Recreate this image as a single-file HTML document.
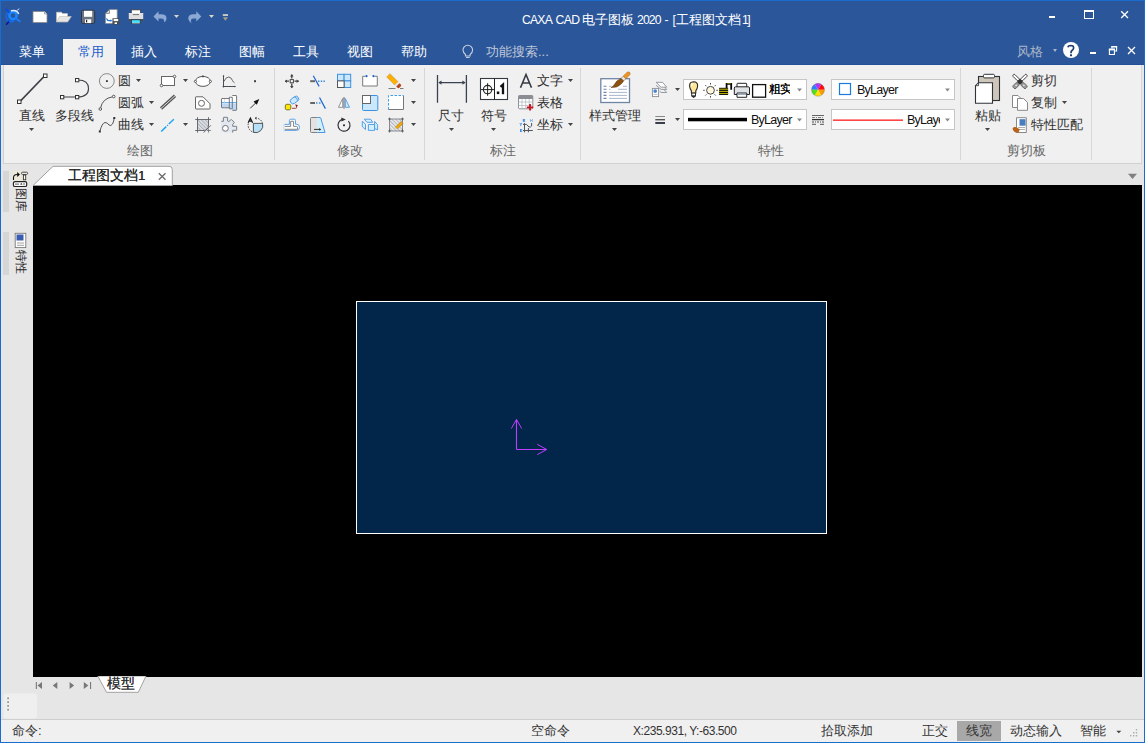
<!DOCTYPE html>
<html><head><meta charset="utf-8">
<style>
*{box-sizing:border-box}
html,body{margin:0;padding:0}
body{width:1145px;height:743px;overflow:hidden;position:relative;background:#e6e6e6;font-family:"Liberation Sans",sans-serif;font-size:13px;color:#444}
.a{position:absolute}
.t{position:absolute;white-space:nowrap;line-height:1}
svg{position:absolute;overflow:visible}
.dd{position:absolute;width:0;height:0;border-left:2.5px solid transparent;border-right:2.5px solid transparent;border-top:3px solid #444}
.sep{position:absolute;width:1px;top:68px;height:92px;background:#d6d6d6}
.lbl{position:absolute;top:144px;line-height:14px;font-size:13px;color:#666;white-space:nowrap}
.tab{position:absolute;top:45px;line-height:14px;color:#fff;white-space:nowrap}
</style></head><body>
<!-- window border -->
<div class="a" style="left:0;top:0;width:1145px;height:743px;border:1px solid #1a6dd0"></div>
<!-- title + tab bar -->
<div class="a" style="left:1px;top:1px;width:1143px;height:64px;background:#2b579a"></div>
<div class="a" style="left:1px;top:64px;width:1143px;height:1px;background:#24509a"></div>
<div class="t" style="left:522px;top:14px;color:#fff;font-size:12.2px;letter-spacing:-0.8px">CAXA</div><div class="t" style="left:555.5px;top:14px;color:#fff;font-size:12.2px;letter-spacing:-0.6px">CAD</div>
<div class="t" style="left:582px;top:13px;color:#fff;font-size:13px">电子图板</div>
<div class="t" style="left:637px;top:14px;color:#fff;font-size:12.2px;letter-spacing:-0.9px">2020</div>
<div class="t" style="left:664.5px;top:14px;color:#fff;font-size:12.2px">-</div>
<div class="t" style="left:672.5px;top:14px;color:#fff;font-size:12.2px">[</div>
<div class="t" style="left:676px;top:13px;color:#fff;font-size:13px">工程图文档</div>
<div class="t" style="left:742px;top:14px;color:#fff;font-size:12.2px;letter-spacing:-1.5px">1]</div>
<!-- QAT icons -->
<svg style="left:0;top:0" width="240" height="34">
 <!-- logo -->
 <g fill="none" stroke-linecap="round">
  <path d="M9.5 10.5 Q5.5 13.5 6.5 18 Q7.5 21.5 11 21.5" stroke="#1468e8" stroke-width="1.6"/>
  <circle cx="13" cy="15.6" r="3.6" stroke="#1a86ff" stroke-width="2.6"/>
  <path d="M11.5 10.8 Q16.5 9.5 18.5 13.5" stroke="#d6ecff" stroke-width="1.5"/>
  <path d="M17.5 10 L19 9" stroke="#cfe6ff" stroke-width="1"/>
  <path d="M5.8 9.2 L9 12" stroke="#0a4ed8" stroke-width="1.7"/>
  <path d="M15.5 18.3 L19.8 21.2" stroke="#1a7cff" stroke-width="1.9"/>
  <path d="M6.5 24.2 L9.3 21.2" stroke="#001a9a" stroke-width="1.6"/>
  <path d="M9.5 21 Q11.5 22.2 13.5 21" stroke="#126ef0" stroke-width="1.8"/>
 </g>
 <!-- new -->
 <path d="M33 11.5 H44.5 L47 14 V22.5 H33 Z" fill="#fff" stroke="#8a8a8a" stroke-width="0.8"/>
 <path d="M44.5 11.5 V14 H47" fill="#d8d8d8" stroke="#8a8a8a" stroke-width="0.6"/>
 <!-- open -->
 <path d="M56.5 12.2 H61.5 L62.5 13.5 H67.5 V21.8 H56.5 Z" fill="#fff" stroke="#c8c0b0" stroke-width="0.6"/>
 <path d="M56.5 21.8 L59.5 16.5 H71.3 L67.8 21.8 Z" fill="#e6e6e6" stroke="#c8c0b0" stroke-width="0.6"/>
 <!-- save -->
 <rect x="81.5" y="10.2" width="13.2" height="13.2" rx="1.3" fill="#6c7480" stroke="#27354a" stroke-width="1"/>
 <rect x="84" y="10.8" width="8.2" height="6" fill="#fff"/>
 <rect x="85" y="19.3" width="6.2" height="3.8" fill="#fff"/>
 <rect x="86" y="19.8" width="1.2" height="2.6" fill="#222"/>
 <!-- save as -->
 <path d="M109.5 9.5 H117.2 V23.5 H105.5 V13.5 Z" fill="#fff" stroke="#8a8a8a" stroke-width="0.7"/>
 <path d="M105.5 13.5 H109.5 V9.5 Z" fill="#d6d6d6" stroke="#777" stroke-width="0.7"/>
 <path d="M106.5 18.3 Q107 20.6 109 20.6 H111" fill="none" stroke="#2a78d0" stroke-width="1.2"/>
 <path d="M110.5 19.2 L112.2 20.6 L110.5 22 Z" fill="#2a78d0"/>
 <rect x="112.4" y="18.2" width="7.2" height="6.3" rx="0.6" fill="#484c54"/>
 <rect x="113.6" y="19" width="4.6" height="2.1" fill="#fff"/>
 <rect x="114.6" y="22.4" width="2.4" height="1.6" fill="#fff"/>
 <!-- printer -->
 <path d="M131.3 9.8 H140.6 V13 L139 14.6 H132.9 L131.3 13 Z" fill="#fff" stroke="#2a2e34" stroke-width="0.8"/>
 <rect x="128.8" y="13.3" width="14.4" height="5.9" fill="#dedede"/>
 <rect x="128.8" y="13.3" width="14.4" height="0.8" fill="#f4f4f4"/>
 <path d="M132.9 14.6 H139" stroke="#555" stroke-width="0.8"/>
 <rect x="128.6" y="19.1" width="14.8" height="2" fill="#4a5058"/>
 <rect x="131.6" y="19.8" width="8.6" height="3.6" fill="#48dcfd" stroke="#2a2e34" stroke-width="0.7"/>
 <rect x="132" y="22.8" width="7.8" height="0.6" fill="#d8d0c8"/>
 <!-- undo -->
 <path d="M153.5 16.5 L158.5 11.2 V14.2 H162 Q166.8 14.5 166.5 19 Q166 21.5 164 22.6 Q164.6 20.8 163.5 19.2 Q162.5 18.3 160 18.5 H158.5 V21.6 Z" fill="#8ca9d6"/>
 <path d="M174 15 H179 L176.5 18 Z" fill="#ddd6c8"/>
 <!-- redo -->
 <path d="M201.3 16.5 L196.3 11.2 V14.2 H192.8 Q188 14.5 188.3 19 Q188.8 21.5 191.5 23.5 Q190.2 20.8 191.3 19.2 Q192.3 18.3 194.8 18.5 H196.3 V21.6 Z" fill="#8ca9d6"/>
 <path d="M209 15 H214 L211.5 18 Z" fill="#ddd6c8"/>
 <!-- customize -->
 <rect x="222.8" y="14.2" width="5.2" height="1.7" fill="#ddd6c8"/>
 <path d="M222.8 17.2 H228 L225.4 20.8 Z" fill="#a89e88"/>
</svg>
<!-- window controls -->
<div class="a" style="left:1049px;top:16px;width:6px;height:2px;background:#fff"></div>
<div class="a" style="left:1084px;top:10px;width:9.5px;height:9px;border:1px solid #fff;border-top-width:2px"></div>
<svg style="left:1120px;top:10px" width="10" height="10"><path d="M1.2 1.2 L8 8 M8 1.2 L1.2 8" stroke="#fff" stroke-width="1.3"/></svg>
<!-- ribbon-row right controls -->
<div class="a" style="left:1052.5px;top:48.5px;width:0;height:0;border-left:2.5px solid transparent;border-right:2.5px solid transparent;border-top:3px solid #aab4c6"></div>
<div class="a" style="left:1063px;top:42px;width:16px;height:16px;border-radius:50%;background:#fff"></div>
<svg style="left:1060px;top:40px" width="20" height="20"><path d="M7.8 7.3 Q8.3 5.5 10.8 5.5 Q13.8 5.6 13.6 8.2 Q13.4 9.6 12 10.5 Q11 11.3 11 12.8 V13.3" fill="none" stroke="#1f3b72" stroke-width="1.7"/><rect x="10" y="14.3" width="2" height="1.9" fill="#1f3b72"/></svg>
<div class="a" style="left:1090px;top:52px;width:6px;height:2px;background:#fff"></div>
<svg style="left:1106px;top:44px" width="14" height="14"><path d="M5.9 4.4 V2.6 H10.6 V7 H8.9" fill="none" stroke="#fff" stroke-width="1.1"/><path d="M3.4 5.4 H8.4 V10.5 H3.4 Z" fill="none" stroke="#fff" stroke-width="1.1"/><rect x="2.9" y="4.6" width="6" height="1.8" fill="#fff"/><rect x="5.4" y="2" width="5.7" height="1.4" fill="#fff"/></svg>
<svg style="left:1127px;top:46px" width="10" height="10"><path d="M1 1 L8 8 M8 1 L1 8" stroke="#fff" stroke-width="1.3"/></svg>
<svg style="left:460px;top:43px" width="16" height="18"><path d="M5.5 11.5 Q3 9.5 3 7 A4.8 4.8 0 0 1 12.6 7 Q12.6 9.5 10.1 11.5 V13 H5.5 Z M6 14.5 H9.6" fill="none" stroke="#c8d0dc" stroke-width="1.1"/></svg>

<!-- tabs -->
<div class="a" style="left:63px;top:39px;width:53px;height:26px;background:#f0f0f0"></div>
<div class="tab" style="left:19px">菜单</div>
<div class="tab" style="left:78px;color:#1a5dcc">常用</div>
<div class="tab" style="left:131px">插入</div>
<div class="tab" style="left:185px">标注</div>
<div class="tab" style="left:239px">图幅</div>
<div class="tab" style="left:293px">工具</div>
<div class="tab" style="left:347px">视图</div>
<div class="tab" style="left:401px">帮助</div>
<div class="tab" style="left:486px;color:#c0c8d8">功能搜索...</div>
<div class="tab" style="left:1017px;color:#aab4c6">风格</div>

<!-- ribbon -->
<div class="a" style="left:1px;top:65px;width:1143px;height:99px;background:#e6e6e6"></div>
<div class="a" style="left:3px;top:65px;width:1139px;height:99px;background:#f0f0f0;border-left:1px solid #d0d0d0;border-right:1px solid #d6d6d6;border-bottom:1px solid #d0d0d0"></div>
<div class="sep" style="left:274px"></div>
<div class="sep" style="left:424px"></div>
<div class="sep" style="left:580px"></div>
<div class="sep" style="left:960px"></div>
<div class="sep" style="left:1091px"></div>
<div class="lbl" style="left:127px">绘图</div>
<div class="lbl" style="left:337px">修改</div>
<div class="lbl" style="left:490px">标注</div>
<div class="lbl" style="left:758px">特性</div>
<div class="lbl" style="left:1007px">剪切板</div>

<!-- ribbon texts -->
<div class="t" style="left:19px;top:109px;color:#2e2e2e">直线</div>
<div class="t" style="left:55px;top:109px;color:#2e2e2e">多段线</div>
<div class="t" style="left:118px;top:74px;color:#2e2e2e">圆</div>
<div class="t" style="left:118px;top:96px;color:#2e2e2e">圆弧</div>
<div class="t" style="left:118px;top:118px;color:#2e2e2e">曲线</div>
<div class="t" style="left:438px;top:109px;color:#2e2e2e">尺寸</div>
<div class="t" style="left:481px;top:109px;color:#2e2e2e">符号</div>
<div class="t" style="left:537px;top:74px;color:#2e2e2e">文字</div>
<div class="t" style="left:537px;top:96px;color:#2e2e2e">表格</div>
<div class="t" style="left:537px;top:118px;color:#2e2e2e">坐标</div>
<div class="t" style="left:589px;top:109px;color:#2e2e2e">样式管理</div>
<div class="t" style="left:975px;top:109px;color:#2e2e2e">粘贴</div>
<div class="t" style="left:1031px;top:74px;color:#2e2e2e">剪切</div>
<div class="t" style="left:1031px;top:96px;color:#2e2e2e">复制</div>
<div class="t" style="left:1031px;top:118px;color:#2e2e2e">特性匹配</div>
<!-- combos -->
<div class="a" style="left:683px;top:79px;width:124px;height:21px;background:#fff;border:1px solid #c6c6c6"></div>
<div class="a" style="left:683px;top:109px;width:124px;height:21px;background:#fff;border:1px solid #c6c6c6"></div>
<div class="a" style="left:831px;top:79px;width:124px;height:21px;background:#fff;border:1px solid #c6c6c6"></div>
<div class="a" style="left:831px;top:109px;width:124px;height:21px;background:#fff;border:1px solid #c6c6c6"></div>
<div class="t" style="left:769px;top:83px;color:#000;font-size:12px;width:21px;overflow:hidden;text-shadow:0.3px 0 0 #000;letter-spacing:-1.5px">粗实</div>
<div class="t" style="left:751px;top:114px;color:#111;font-size:12.5px;letter-spacing:-0.75px">ByLayer</div>
<div class="t" style="left:857px;top:84px;color:#111;font-size:12.5px;letter-spacing:-0.75px">ByLayer</div>
<div class="t" style="left:907px;top:114px;color:#111;font-size:12.5px;letter-spacing:-0.75px;width:33px;overflow:hidden">ByLayer</div>
<svg style="left:0;top:0" width="1145" height="165">
 <g fill="#444">
  <path d="M29 128 h5 l-2.5 3z"/><path d="M136 79 h5 l-2.5 3z"/><path d="M149 101 h5 l-2.5 3z"/><path d="M149 123 h5 l-2.5 3z"/>
  <path d="M183 79 h5 l-2.5 3z"/><path d="M183 123 h5 l-2.5 3z"/>
  <path d="M411 79 h5 l-2.5 3z"/><path d="M411 101 h5 l-2.5 3z"/><path d="M411 123 h5 l-2.5 3z"/>
  <path d="M449 128 h5 l-2.5 3z"/><path d="M491 128 h5 l-2.5 3z"/>
  <path d="M568 79 h5 l-2.5 3z"/><path d="M568 123 h5 l-2.5 3z"/>
  <path d="M612 128 h5 l-2.5 3z"/>
  <path d="M675 88 h5 l-2.5 3z"/><path d="M675 118 h5 l-2.5 3z"/>
  <path d="M985 128 h5 l-2.5 3z"/><path d="M1062 101 h5 l-2.5 3z"/>
 </g>
 <g fill="#888">
  <path d="M797 88.5 h5 l-2.5 3z"/><path d="M797 118.5 h5 l-2.5 3z"/><path d="M945 88.5 h5 l-2.5 3z"/><path d="M945 118.5 h5 l-2.5 3z"/>
 </g>
 <!-- line -->
 <path d="M19.5 102 L45 75.5" stroke="#3c3f45" stroke-width="1.8"/>
 <rect x="17.5" y="100" width="3.5" height="3.5" fill="#fff" stroke="#333" stroke-width="1"/>
 <rect x="43.5" y="74" width="3.5" height="3.5" fill="#fff" stroke="#333" stroke-width="1"/>
 <!-- polyline -->
 <path d="M62.5 97 H77.5 Q88.5 97 88.5 88.5 Q88.5 80 78 80" fill="none" stroke="#3c3f45" stroke-width="1.1"/>
 <rect x="60.5" y="95.5" width="3.3" height="3.3" fill="#fff" stroke="#333" stroke-width="1"/>
 <rect x="75.5" y="95.5" width="3.3" height="3.3" fill="#fff" stroke="#333" stroke-width="1"/>
 <rect x="75.5" y="78.5" width="3.3" height="3.3" fill="#fff" stroke="#333" stroke-width="1"/>
 <!-- circle -->
 <circle cx="106.8" cy="81" r="7.4" fill="none" stroke="#8a8a8a" stroke-width="1"/>
 <rect x="106" y="80.2" width="1.8" height="1.8" fill="#333"/>
 <!-- arc -->
 <path d="M100.5 108 Q102.5 98.5 112.5 96.8" fill="none" stroke="#555" stroke-width="1"/>
 <circle cx="100.3" cy="109" r="1.3" fill="#fff" stroke="#444" stroke-width="0.9"/>
 <circle cx="113.7" cy="96.5" r="1.3" fill="#fff" stroke="#444" stroke-width="0.9"/>
 <!-- spline -->
 <path d="M99.8 131.5 Q102 123 105 122.5 Q107.5 122.5 109 125 Q111 126.5 112.5 124 Q114 121 114.2 118" fill="none" stroke="#555" stroke-width="1"/>
 <rect x="98.8" y="130.5" width="2" height="2" fill="#333"/><rect x="113.3" y="117" width="2" height="2" fill="#333"/>
 <!-- rect -->
 <rect x="161.5" y="76.5" width="13" height="9" fill="#fff" stroke="#666" stroke-width="1"/>
 <circle cx="161.5" cy="85.5" r="1.3" fill="#fff" stroke="#555" stroke-width="0.9"/>
 <circle cx="174.5" cy="76.5" r="1.3" fill="#fff" stroke="#555" stroke-width="0.9"/>
 <!-- double line -->
 <path d="M161 108.5 L175 95.8" stroke="#555" stroke-width="3.2"/>
 <path d="M161 108.5 L175 95.8" stroke="#ddd" stroke-width="1"/>
 <!-- center line -->
 <path d="M161.2 131.5 L174.7 118.4" stroke="#1aa3ef" stroke-width="1.4" stroke-dasharray="7 1.2 1.2 1.2"/>
 <!-- ellipse -->
 <ellipse cx="202.9" cy="81.4" rx="7.5" ry="5" fill="#fff" stroke="#555" stroke-width="1"/>
 <circle cx="195.4" cy="81.4" r="1.1" fill="#fff" stroke="#444" stroke-width="0.8"/>
 <circle cx="210.4" cy="81.4" r="1.1" fill="#fff" stroke="#444" stroke-width="0.8"/>
 <rect x="202" y="75.6" width="1.8" height="1.6" fill="#444"/>
 <!-- shape hole -->
 <path d="M196 96.8 H203 L210 103.8 V108.6 Q210 109 209.5 109 H196 Q195.5 109 195.5 108.5 V97.3 Q195.5 96.8 196 96.8Z" fill="#fff" stroke="#666" stroke-width="1"/>
 <circle cx="201.5" cy="103.3" r="3" fill="none" stroke="#666" stroke-width="1"/>
 <!-- hatch -->
 <defs><pattern id="h1" width="2.6" height="2.6" patternUnits="userSpaceOnUse" patternTransform="rotate(-45)"><rect width="2.6" height="2.6" fill="#dcdfe4"/><rect width="0.9" height="2.6" fill="#a9aeb5"/></pattern></defs>
 <path d="M197.5 119.5 H208.5 V125 Q208.5 130.5 203 130.5 H197.5 Z" fill="url(#h1)"/>
 <path d="M195.2 119.5 H210.9 M195.2 130.5 H204 M197.5 117.2 V132.6 M208.5 117.2 V125.5 M208.5 125 Q208.5 130.5 203 130.5 M203.6 132.6 L210.9 125.3" fill="none" stroke="#5a5e64" stroke-width="0.9"/>
 <path d="M208.5 128.5 V132.6 M207 130.5 H210.9" stroke="#6a6e74" stroke-width="0.8"/>
 <!-- chart -->
 <path d="M223.5 75.5 V87.5 M222.5 86.5 H235.5" fill="none" stroke="#4a4e55" stroke-width="1"/>
 <path d="M222.5 76.3 L223.5 75 L224.5 76.3 Z M234.5 85.5 L235.8 86.5 L234.5 87.5 Z" fill="#4a4e55"/>
 <path d="M223.8 81.5 Q226 77 228.5 77 Q231 77 232.5 80.5 Q233.5 82.5 234.5 82.8" fill="none" stroke="#555" stroke-width="0.9"/>
 <!-- point -->
 <rect x="254" y="80.2" width="2" height="2" fill="#444"/>
 <!-- shaft -->
 <rect x="221.5" y="98.5" width="7.8" height="9.3" fill="#fff"/><rect x="221.5" y="103.5" width="7.8" height="4.3" fill="#bcd8f4"/>
 <rect x="229.3" y="97.3" width="3" height="11.5" fill="#fff"/><rect x="229.3" y="103.5" width="3" height="5.3" fill="#bcd8f4"/>
 <rect x="232.3" y="95.5" width="4.3" height="14.8" fill="#fff"/><rect x="232.3" y="103.5" width="4.3" height="6.8" fill="#bcd8f4"/>
 <path d="M221.5 102.6 H236.6" stroke="#5aa6ee" stroke-width="1"/>
 <path d="M229.3 98.5 H222 Q221.5 98.5 221.5 99 V107.3 Q221.5 107.8 222 107.8 H229.3 M229.3 97.3 H232.3 V108.8 H229.3 Z M232.3 95.5 H236.1 Q236.6 95.5 236.6 96 V109.8 Q236.6 110.3 236.1 110.3 H232.3" fill="none" stroke="#666a70" stroke-width="0.9"/>
 <path d="M224.5 99 V107.5" stroke="#c8ccd2" stroke-width="0.6"/>
 <!-- arrow -->
 <path d="M250.3 108.3 L256 102.6" stroke="#333" stroke-width="1"/>
 <path d="M259.3 99 L253.5 101.5 L256.8 104.8 Z" fill="#111"/>
 <!-- gear -->
 <path d="M221.3 121.3 H223.4 V117.3 H227.6 V121 L228.8 121.6 L231.3 119.4 L234.3 122.4 L232.7 124.5 V126.3 H236.7 V130.3 H232.7 V132.6 H221.3 Z" fill="#e2e7f0"/>
 <path d="M221.3 121.3 H223.4 V117.7 Q223.4 117.3 223.8 117.3 H227.2 Q227.6 117.3 227.6 117.7 V121 L228.8 121.6 L231.3 119.4 L234.3 122.4 L232.7 124.5 V126.3 H236.3 Q236.7 126.3 236.7 126.7 V129.9 Q236.7 130.3 236.3 130.3 H232.7 V132.6" fill="none" stroke="#6e737a" stroke-width="0.9"/>
 <circle cx="225.4" cy="128.3" r="2.9" fill="#fff" stroke="#6e737a" stroke-width="1"/>
 <!-- A circle -->
 <path d="M253.4 123.4 H262.6 A7.35 7.35 0 0 1 253.4 132.4 Z" fill="#b5e0f8" stroke="#444" stroke-width="0.9"/>
 <path d="M255.5 118 A7.35 7.35 0 0 1 262.5 123.2" fill="none" stroke="#333" stroke-width="0.9" stroke-dasharray="1.6 1.1"/>
 <path d="M248.3 123.5 A7.35 7.35 0 0 0 253.2 132.2" fill="none" stroke="#333" stroke-width="0.9" stroke-dasharray="1.6 1.1"/>
 <path d="M256.5 117.3 L255 118.3 L256.6 119.2" fill="none" stroke="#333" stroke-width="0.8"/>
 <path d="M248.2 122.7 L250.4 118.2 L252.6 122.7 M249 121.1 H251.8" fill="none" stroke="#1a1a1a" stroke-width="1.3"/>
</svg>
<svg style="left:0;top:0" width="1145" height="165">
 <defs>
  <pattern id="h2" width="2.5" height="2.5" patternUnits="userSpaceOnUse" patternTransform="rotate(45)"><rect width="2.5" height="2.5" fill="#e4e6ea"/><rect width="1" height="2.5" fill="#aab0b8"/></pattern>
 </defs>
 <!-- move -->
 <rect x="290.2" y="79.6" width="3.2" height="3.2" fill="#fff" stroke="#444" stroke-width="1"/>
 <path d="M291.8 74.5 V78.5 M291.8 83.5 V87.8 M285 81.2 H289 M294.5 81.2 H298.8" stroke="#444" stroke-width="1.3"/>
 <path d="M290 76.5 L291.8 74.3 L293.6 76.5 Z M290 86 L291.8 88.2 L293.6 86 Z M287 79.4 L284.8 81.2 L287 83 Z M296.6 79.4 L298.8 81.2 L296.6 83 Z" fill="#444"/>
 <!-- trim -->
 <path d="M310.2 81.2 H315" stroke="#666" stroke-width="2"/>
 <path d="M318 81.2 H326" stroke="#3f8fe0" stroke-width="1.6" stroke-dasharray="1.5 1.2"/>
 <path d="M313.3 75.8 L319.1 86.4" stroke="#1a66d0" stroke-width="1.2"/>
 <!-- array -->
 <rect x="337.5" y="74.3" width="6.6" height="6.6" fill="#c9e8fb" stroke="#3f90e0" stroke-width="1"/>
 <rect x="344.1" y="74.3" width="6.6" height="6.6" fill="#c9e8fb" stroke="#3f90e0" stroke-width="1"/>
 <rect x="344.1" y="80.9" width="6.6" height="6.6" fill="#c9e8fb" stroke="#3f90e0" stroke-width="1"/>
 <rect x="337.5" y="80.9" width="6.6" height="6.6" fill="#fff" stroke="#555" stroke-width="1"/>
 <!-- break -->
 <path d="M362.7 76.3 H377.3 V86 H362.7 Z" fill="#fff"/>
 <path d="M365.3 76.3 H362.7 V86 H377.3 V76.3 H374.7" fill="none" stroke="#7a7a7a" stroke-width="1"/>
 <circle cx="366.5" cy="76.2" r="1.1" fill="#1a5fd0"/><circle cx="373.5" cy="76.2" r="1.1" fill="#1a5fd0"/>
 <!-- eraser -->
 <g transform="translate(394.2 81.2) rotate(45)">
  <rect x="-8.3" y="-2.3" width="11.5" height="4.6" fill="#ffb000" stroke="#b88a40" stroke-width="0.5"/>
  <rect x="3.2" y="-2.3" width="2" height="4.6" fill="#e4e6ea"/>
  <path d="M5.2 -2.3 H7 Q8.3 -2.3 8.3 -1 V1 Q8.3 2.3 7 2.3 H5.2 Z" fill="#b8431a"/>
 </g>
 <path d="M388.5 88.5 H395.5 M400 88.5 H403.5" stroke="#7a7a7a" stroke-width="1"/>
 <!-- copy -->
 <g transform="rotate(-35 294.5 100)">
  <rect x="290" y="97.3" width="9" height="5.4" rx="2.5" fill="#cbe9fb" stroke="#4a98e4" stroke-width="0.9"/>
  <path d="M296 97.5 Q298.5 99.5 296.5 102.5" fill="none" stroke="#4a98e4" stroke-width="0.8"/>
 </g>
 <rect x="285.3" y="104.3" width="5.5" height="5.5" rx="1.5" fill="#ffe800" stroke="#5a5a20" stroke-width="0.8"/>
 <path d="M292 108.3 H295.8 Q296.6 108.3 296.6 107.5 V106" fill="none" stroke="#a03030" stroke-width="0.9"/>
 <path d="M295.2 104.3 L298 105.3 L296.2 107 Z" fill="#8a1010"/>
 <!-- extend -->
 <path d="M310.2 103 H315" stroke="#666" stroke-width="2"/>
 <path d="M316 103 H321" stroke="#3f8fe0" stroke-width="1.6" stroke-dasharray="1.5 1.5"/>
 <path d="M319.5 97.5 L325.4 108.6" stroke="#1a66d0" stroke-width="1.2"/>
 <!-- mirror -->
 <path d="M344 97 V108.7" stroke="#999" stroke-width="1.6"/>
 <path d="M342.7 98.5 L338.5 107.3 H342.7 Z" fill="#fff" stroke="#777" stroke-width="0.8"/>
 <path d="M345.3 98.5 L349.5 107.3 H345.3 Z" fill="#c9e8fb" stroke="#3f90e0" stroke-width="0.8"/>
 <!-- scale -->
 <rect x="362.5" y="95.5" width="15.3" height="15" rx="1" fill="#c9e8fb" stroke="#3f90e0" stroke-width="1"/>
 <rect x="362.5" y="95.5" width="8" height="8" fill="#fff" stroke="#666" stroke-width="1"/>
 <!-- dashed rect -->
 <rect x="388.5" y="95.5" width="15" height="14" fill="#fff"/>
 <path d="M388.5 109.5 V95.5 H403.5" fill="none" stroke="#3fa0f0" stroke-width="1" stroke-dasharray="2.5 1.5"/>
 <path d="M403.5 95.5 V109.5 H388.5" fill="none" stroke="#777" stroke-width="1"/>
 <!-- offset -->
 <path d="M284.3 124.4 H289.4 V120.5 Q289.4 119.2 290.8 119.2 H294.2 Q295.5 119.2 295.5 120.5 V124.2 H297 Q299.5 124.5 299.5 127.5 Q299.5 130.4 296.5 130.4 H284.3 Z" fill="#fff" stroke="#4a98e4" stroke-width="0.9"/>
 <path d="M284.3 124.4 V130.4" stroke="#f0f0f0" stroke-width="1"/>
 <path d="M285 126.4 H290.7 V121.3 H293.6 V126.4 H296.5 Q297.5 126.4 297.5 127.5 V129.3 H285" fill="none" stroke="#777" stroke-width="0.9"/>
 <!-- stretch -->
 <rect x="310.5" y="117.5" width="7" height="15" fill="#e2e2e2"/>
 <path d="M317.5 117.5 H320.3 L325 132.5 H317.5 Z" fill="#cfeffd"/>
 <path d="M317.5 117.5 H311.5 Q310.5 117.5 310.5 118.5 V131.5 Q310.5 132.5 311.5 132.5 H317.5" fill="none" stroke="#808080" stroke-width="1"/>
 <path d="M317.5 117.5 H320 Q320.6 117.5 320.8 118.2 L325 132.5 H317.5" fill="none" stroke="#4a98e4" stroke-width="1"/>
 <path d="M314 129.4 H320" stroke="#333" stroke-width="1"/>
 <path d="M319.3 128 L321.2 129.4 L319.3 130.8 Z" fill="#222"/>
 <!-- rotate -->
 <path d="M348.4 121.1 A6 6 0 1 1 342.5 119.4" fill="none" stroke="#2f3238" stroke-width="1.2"/>
 <path d="M341.3 117.4 L345.8 119.5 L341.5 121.6 Z" fill="#2f3238"/>
 <rect x="343.1" y="124.4" width="1.8" height="1.8" fill="#222"/>
 <!-- 3d -->
 <g fill="#d2f0fd" stroke="#4a98e4" stroke-width="0.9" stroke-linejoin="round">
  <path d="M364.2 119.2 H370.6 L372.7 122.3 H367 Z"/>
  <path d="M362.3 121.3 L365.5 124.2 V129.6 L362.3 126.6 Z"/>
  <path d="M368.4 124.5 H374.5 V130.4 H368.4 Z"/>
  <path d="M374.6 121.4 L377.6 124.8 V129.9 L374.6 128.5 Z"/>
 </g>
 <!-- hatch edit -->
 <defs><pattern id="h3" width="2.6" height="2.6" patternUnits="userSpaceOnUse" patternTransform="rotate(-45)"><rect width="2.6" height="2.6" fill="#e6e8eb"/><rect width="0.9" height="2.6" fill="#b4b8be"/></pattern></defs>
 <rect x="389.5" y="119" width="13" height="12" fill="url(#h3)" stroke="#6f747a" stroke-width="0.8"/>
 <path d="M388 119 H391 M389.5 117.6 V120.5 M401 119 H404 M402.5 117.6 V120.5 M388 131 H391 M389.5 129.5 V132.5 M401 131 H404 M402.5 129.5 V132.5" stroke="#555" stroke-width="0.8"/>
 <g transform="translate(399.5 125) rotate(-45)">
  <rect x="-4.5" y="-1.3" width="8" height="2.6" fill="#f5a800" stroke="#9a6a10" stroke-width="0.5"/>
  <path d="M-4.5 -1.3 L-6.5 0 L-4.5 1.3 Z" fill="#e8d8b0"/>
 </g>
 <!-- dim -->
 <path d="M437.5 75 V102.8 M466.4 75 V102.8 M439 82.6 H465" stroke="#3a4250" stroke-width="1.3"/>
 <path d="M438.3 82.6 L441.5 80.5 V84.7 Z M465.6 82.6 L462.4 80.5 V84.7 Z" fill="#3a4250"/>
 <!-- symbol -->
 <rect x="480.5" y="78.5" width="27" height="21" fill="#fff" stroke="#333a44" stroke-width="1.1"/>
 <path d="M494.5 78.5 V99.5 M481 89.6 H494 M487.6 83.2 V95.8" stroke="#222" stroke-width="1"/>
 <circle cx="487.6" cy="89.6" r="4.2" fill="none" stroke="#222" stroke-width="1.1"/>
 <rect x="496.8" y="91.5" width="2.5" height="2.6" fill="#111"/>
 <path d="M500.5 86.8 L503 84.5 V94.2" fill="none" stroke="#111" stroke-width="2.3"/>
 <!-- A -->
 <path d="M520.5 87.7 L526 74.5 L531.5 87.7 M522.5 83 H529.5" fill="none" stroke="#363b44" stroke-width="1.6"/>
 <!-- table -->
 <rect x="518.5" y="95.5" width="14.3" height="13.3" rx="1" fill="#fff" stroke="#8a8e94" stroke-width="1"/>
 <rect x="518.5" y="95.5" width="14.3" height="3.5" fill="#8a8e94"/>
 <path d="M518.5 102 H532.8 M518.5 105.5 H532.8 M522 99 V108.8 M525.6 99 V108.8 M529.2 99 V108.8" stroke="#b8bcc2" stroke-width="0.8"/>
 <path d="M530 104 V110.5 M526.8 107.3 H533.2" stroke="#c8141e" stroke-width="1.8"/>
 <!-- coord -->
 <g fill="#3a8ae0">
  <path d="M522.8 119 H525.2 V119.8 H523.7 V120.1 H525 V120.7 H523.7 V121 H525.2 V121.8 H522.8 Z"/>
  <path d="M520 129 H522.3 V129.8 H520.9 V130.2 H522.1 V130.8 H520.9 V131.2 H522.3 V132 H520 Z"/>
  <path d="M530 119 L531.4 120.4 L532.8 119 V119.9 L532 120.5 L532.8 121.1 V122 L531.4 120.6 L530 122 V121.1 L530.8 120.5 L530 119.9 Z"/>
  <path d="M519.3 123 H520.3 L520.8 124 L521.3 123 H522.3 L521.2 124.6 V125.9 H520.4 V124.6 Z"/>
 </g>
 <path d="M524.5 123 V132.3 M528.4 128 V132.3 M523 130.5 H532.8 M523 124.4 H526.5 L529 127 H530.5 L531.6 126 V123" fill="none" stroke="#50555c" stroke-width="1"/>
 <!-- style manager -->
 <rect x="600.8" y="78.7" width="28.7" height="23.8" fill="#fff" stroke="#6f85a5" stroke-width="1.3"/>
 <path d="M603.5 86.3 H606.5 M603.5 89.3 H606.5 M603.5 92.4 H606.5 M603.5 95.4 H606.5 M603.5 98.4 H606.5" stroke="#6f85a5" stroke-width="1.1"/>
 <path d="M609 89.3 H610.5 M618 89.3 H627 M609 92.4 H627 M609 95.4 H627 M609 98.4 H627 M609 86.3 H611 M623 86.3 H627" stroke="#a8b6cc" stroke-width="1"/>
 <path d="M627.2 72.2 Q628.8 71.5 629.8 72.5 Q630.4 73.8 629.8 74.8 L625.8 78.8 L623.2 76.2 Z" fill="#ee9420" stroke="#9a5a10" stroke-width="0.5"/>
 <path d="M623.2 76.2 L625.8 78.8 L623.6 81 L621 78.4 Z" fill="#e2e4e8" stroke="#9a5a10" stroke-width="0.5"/>
 <path d="M621 78.4 Q617 80 615 83.5 Q613.8 86.3 611 87.5 Q617.5 88 620.5 84.5 Q622.8 82.5 623.6 81 Z" fill="#8e5210" stroke="#5a3008" stroke-width="0.5"/>
 <!-- layer -->
 <path d="M661.1 89.4 H666.7 L662.6 84.5 M656.1 85.3 L661.1 89.4" fill="none" stroke="#8a9099" stroke-width="0.9"/>
 <path d="M659.5 91 L661.1 92.5 H666.7 L664 89.6" fill="none" stroke="#8a9099" stroke-width="0.9"/>
 <path d="M656.1 82.3 H662.6 L666.7 87.2 H661.1 Z" fill="#fff" stroke="#8a9099" stroke-width="0.9"/>
 <rect x="652.4" y="88.4" width="6.2" height="8.2" fill="#fff" stroke="#8a8f96" stroke-width="0.9"/>
 <circle cx="655.2" cy="91.1" r="1.9" fill="#4a88d0"/>
 <path d="M653.5 94.5 H657.5" stroke="#aaa" stroke-width="0.7"/>
 <!-- lw -->
 <path d="M655.3 116.5 H665" stroke="#888" stroke-width="1"/>
 <path d="M655.3 119.7 H665" stroke="#555" stroke-width="1.4"/>
 <path d="M655.3 123 H665" stroke="#2f3640" stroke-width="1.9"/>
 <!-- bulb -->
 <path d="M689.6 86.3 Q689.3 81.8 693.5 81.7 Q697.9 81.8 697.6 86.3 Q697.4 88.8 695.8 90.8 V93 H691.4 V90.8 Q689.8 88.8 689.6 86.3 Z" fill="#fde69a" stroke="#2a2a2a" stroke-width="1.1"/>
 <path d="M691.2 92.8 H696 V96.2 L693.6 97.9 L691.2 96.2 Z" fill="#2a2a2a"/>
 <rect x="692.2" y="93.6" width="2.8" height="1.7" fill="#fff"/>
 <ellipse cx="691.9" cy="84.8" rx="0.8" ry="1.3" fill="#fff"/>
 <!-- sun -->
 <circle cx="710.5" cy="90.3" r="3.9" fill="#fff6df" stroke="#333" stroke-width="0.9"/>
 <path d="M710.5 83 V84.5 M710.5 96 V97.6 M703.2 90.3 H704.7 M716.3 90.3 H717.8 M705.3 85.1 L706.4 86.2 M714.6 94.4 L715.7 95.5 M715.7 85.1 L714.6 86.2 M706.4 94.4 L705.3 95.5" stroke="#333" stroke-width="0.9"/>
 <!-- lock -->
 <rect x="719.1" y="87.8" width="9" height="7.2" fill="#0a0a0a"/>
 <path d="M719.1 89.2 H728.1 M719.1 91.4 H728.1 M719.1 93.6 H728.1" stroke="#e0d000" stroke-width="0.9"/>
 <path d="M726.6 88 V83.8 H731.2 V89.8" fill="none" stroke="#0a0a0a" stroke-width="1.8"/>
 <path d="M727.2 83.6 H730.8" stroke="#d8c800" stroke-width="0.6"/>
 <!-- printer small -->
 <path d="M737 87 V84 Q737 83.3 737.7 83.3 H746 Q746.7 83.3 746.7 84 V87" fill="#fff" stroke="#222" stroke-width="1"/>
 <path d="M734.3 88 Q734.3 86.8 735.5 86.8 H748.3 Q749.5 86.8 749.5 88 V94.5 H734.3 Z" fill="#dfe2e6" stroke="#222" stroke-width="1"/>
 <path d="M737 93 H746.7 V97.3 H737 Z" fill="#fff" stroke="#222" stroke-width="1"/>
 <rect x="737.5" y="93.5" width="8.7" height="1.4" fill="#8ea2b5"/>
 <!-- square -->
 <rect x="752.6" y="84.6" width="13" height="12.6" fill="#fff" stroke="#111" stroke-width="1.3"/>
 <!-- color wheel -->
 <g transform="translate(818 89.8)">
  <path d="M0 0 L-6.40 -0.00 A6.4 6.4 0 0 1 -3.20 -5.54 Z" fill="#2a80ff"/>
  <path d="M0 0 L-3.20 -5.54 A6.4 6.4 0 0 1 3.20 -5.54 Z" fill="#b232ff"/>
  <path d="M0 0 L3.20 -5.54 A6.4 6.4 0 0 1 6.40 0.00 Z" fill="#ff0a0a"/>
  <path d="M0 0 L6.40 0.00 A6.4 6.4 0 0 1 3.20 5.54 Z" fill="#ff9a00"/>
  <path d="M0 0 L3.20 5.54 A6.4 6.4 0 0 1 -3.20 5.54 Z" fill="#ffe000"/>
  <path d="M0 0 L-3.20 5.54 A6.4 6.4 0 0 1 -6.40 0.00 Z" fill="#55e016"/>
  <circle r="6.4" fill="none" stroke="#7a6a50" stroke-width="0.4"/>
 </g>
 <!-- black line in combo -->
 <rect x="688" y="117.8" width="59" height="3.5" fill="#000"/>
 <!-- blue square in combo -->
 <rect x="839.5" y="83.5" width="11" height="11" fill="none" stroke="#1a7ae0" stroke-width="1.2"/>
 <!-- red line -->
 <rect x="833" y="119.5" width="70" height="1.3" fill="#ff1a1a"/>
 <!-- linetype -->
 <path d="M812 115.5 H824" stroke="#666" stroke-width="1"/>
 <path d="M812 117.5 H824" stroke="#777" stroke-width="0.9" stroke-dasharray="3 1 1 1"/>
 <path d="M812 119.6 H824" stroke="#333" stroke-width="1.3"/>
 <path d="M812 122 H824" stroke="#444" stroke-width="1.1" stroke-dasharray="2 1 1 1"/>
 <path d="M812 124.3 H816 M820 124.3 H824" stroke="#555" stroke-width="1"/>
 <!-- paste -->
 <rect x="978.5" y="76.5" width="21" height="24" fill="#cfc6bb" stroke="#2f3236" stroke-width="1.1"/>
 <rect x="983.5" y="74.3" width="11" height="3.6" rx="1.2" fill="#fff" stroke="#2f3236" stroke-width="1"/>
 <path d="M978.5 82.7 H992.5 V103.3 H975.5 V85.7 Z" fill="#fff" stroke="#2f3236" stroke-width="1.1"/>
 <path d="M975.5 85.7 H978.5 V82.7 Z" fill="#ddd" stroke="#2f3236" stroke-width="0.8"/>
 <!-- scissors -->
 <g transform="translate(1020 81.5) rotate(45)">
  <rect x="-9.5" y="-1.3" width="8" height="2.6" rx="1.2" fill="#fff" stroke="#3a3a3a" stroke-width="0.9"/>
  <rect x="-2" y="-1.8" width="4.5" height="3.6" fill="#333"/>
  <rect x="2.5" y="-2" width="6.5" height="4" rx="1.5" fill="#9a9a9a" stroke="#555" stroke-width="0.7"/>
  <circle cx="5.5" cy="0" r="0.9" fill="#ddd"/>
 </g>
 <g transform="translate(1020 81.5) rotate(135)">
  <rect x="-9.5" y="-1.3" width="8" height="2.6" rx="1.2" fill="#fff" stroke="#3a3a3a" stroke-width="0.9"/>
  <rect x="-2" y="-1.8" width="4.5" height="3.6" fill="#333"/>
  <rect x="2.5" y="-2" width="6.5" height="4" rx="1.5" fill="#9a9a9a" stroke="#555" stroke-width="0.7"/>
  <circle cx="5.5" cy="0" r="0.9" fill="#ddd"/>
 </g>
 <!-- copy icon -->
 <path d="M1012.5 95.5 H1018 L1021 98.5 V107.5 H1012.5 Z" fill="#fff" stroke="#888" stroke-width="1"/>
 <path d="M1017.5 98.5 H1023.5 L1027.5 102.5 V110.3 H1017.5 Z" fill="#fff" stroke="#888" stroke-width="1"/>
 <!-- match props -->
 <path d="M1016.5 117.7 H1026.3 V132.5 H1016.5 Z" fill="#fff" stroke="#888" stroke-width="1"/>
 <rect x="1019.5" y="119.2" width="6" height="6.5" fill="#4a7cc0"/>
 <path d="M1018 127.5 H1025 M1018 129.5 H1025" stroke="#999" stroke-width="0.8"/>
 <path d="M1012.5 128.5 Q1013 126.5 1015.5 127 L1019.5 129 Q1020 131.5 1017.5 132.8 Q1014 133 1012.5 128.5 Z" fill="#b8621c"/>
</svg>
<!-- canvas -->
<div class="a" style="left:33px;top:185px;width:1109px;height:492px;background:#000"></div>
<div class="a" style="left:356px;top:301px;width:471px;height:233px;background:#022649;border:1px solid #fff"></div>

<!-- doc tab strip -->
<svg style="left:0;top:160px" width="1145" height="30">
 <path d="M33 25.5 L53 6.3 H169 Q172.3 6.3 172.3 9.5 V25.5 Z" fill="#fff" stroke="#a0a0a0" stroke-width="1"/>
 <path d="M158.8 173.2 L165.5 179.8 M165.5 173.2 L158.8 179.8" transform="translate(0 -160)" stroke="#6a6a6a" stroke-width="1.3"/>
 <path d="M1128 13.8 H1137 L1132.5 19 Z" fill="#808080"/>
</svg>
<div class="t" style="left:68px;top:169px;color:#2a2a2a;font-size:13.5px;text-shadow:0.4px 0 0 #2a2a2a">工程图文档<span style="font-size:12.5px;letter-spacing:-1px;font-weight:normal">1</span></div>
<!-- left sidebar -->
<div class="a" style="left:3px;top:171px;width:6px;height:41px;background:#d6d6d6"></div>
<div class="a" style="left:3px;top:232px;width:6px;height:43px;background:#d6d6d6"></div>
<svg style="left:0;top:0" width="33" height="290">
 <rect x="12.8" y="170.8" width="15.1" height="16.2" fill="#ebe9d9"/>
 <path d="M13.5 180 V177.5 Q13.5 174.8 17 174.5" fill="none" stroke="#111" stroke-width="1.1"/>
 <path d="M17.2 172 L19.9 174.5 L17.2 177 Z" fill="#000"/>
 <rect x="21.5" y="172.2" width="6.1" height="2.2" rx="1.1" fill="#fff" stroke="#333" stroke-width="0.9"/>
 <rect x="23.4" y="175" width="2.3" height="4.8" fill="#fff" stroke="#333" stroke-width="0.9"/>
 <rect x="13.4" y="181.7" width="13.3" height="4.8" rx="1.6" fill="#fff" stroke="#222" stroke-width="1.2"/>
 <path d="M15 184.1 H19 M20.5 184.1 L21.3 183.3 L22.1 184.1 L21.3 184.9 Z M24 183 V185.2" stroke="#333" stroke-width="0.8" fill="none"/>
 <rect x="15.2" y="233.3" width="10.6" height="14.3" fill="#fff" stroke="#777" stroke-width="0.9"/>
 <rect x="16.5" y="234.5" width="7" height="6" fill="#3a5cb0"/>
 <path d="M17 243 H24 M17 245.3 H24" stroke="#888" stroke-width="0.8"/>
</svg>
<div class="t" style="left:27px;top:188px;font-size:12px;color:#222;transform-origin:0 0;transform:rotate(90deg);line-height:13px">图库</div>
<div class="t" style="left:27px;top:250px;font-size:12px;color:#222;transform-origin:0 0;transform:rotate(90deg);line-height:13px">特性</div>
<!-- bottom tab row -->
<svg style="left:0;top:670px" width="200" height="50">
 <g fill="#777">
  <rect x="35.8" y="12" width="1.1" height="7"/><path d="M42 12 V19 L37.5 15.5 Z"/>
  <path d="M57.3 12 V19 L52.8 15.5 Z"/>
  <path d="M69.6 12 V19 L74.1 15.5 Z"/>
  <path d="M83.8 12 V19 L88.3 15.5 Z"/><rect x="90" y="12" width="1.1" height="7"/>
 </g>
 <path d="M97.8 6 L106.5 22.3 H138.3 L146 6 Z" fill="#fff" stroke="#9a9a9a" stroke-width="0.9"/>
 <rect x="96" y="0" width="52" height="6" fill="#000"/>
 <rect x="3.5" y="23.5" width="33.5" height="25" rx="3" fill="#efefef"/>
 <g fill="#888"><rect x="7.3" y="27.5" width="1.6" height="1.6"/><rect x="7.3" y="31.3" width="1.6" height="1.6"/><rect x="7.3" y="35.1" width="1.6" height="1.6"/><rect x="7.3" y="38.9" width="1.6" height="1.6"/></g>
</svg>
<div class="t" style="left:107px;top:676px;color:#333;font-size:14px;text-shadow:0.4px 0 0 #333">模型</div>
<!-- command/status -->
<div class="a" style="left:1px;top:719px;width:1143px;height:1px;background:#cfcfcf"></div>
<div class="a" style="left:1px;top:720px;width:1143px;height:22px;background:#f0f0f0"></div>
<div class="t" style="left:12px;top:724px;font-size:13px;color:#333">命令:</div>
<div class="t" style="left:531px;top:724px;color:#333">空命令</div>
<div class="t" style="left:633px;top:725px;color:#333;font-size:12px;letter-spacing:-0.45px">X:235.931, Y:-63.500</div>
<div class="t" style="left:821px;top:724px;color:#333">拾取添加</div>
<div class="t" style="left:922px;top:724px;color:#333">正交</div>
<div class="a" style="left:957px;top:721px;width:44px;height:20px;background:#a8a8a8"></div>
<div class="t" style="left:966px;top:724px;color:#333">线宽</div>
<div class="t" style="left:1010px;top:724px;color:#333">动态输入</div>
<div class="t" style="left:1080px;top:724px;color:#333">智能</div>
<svg style="left:1110px;top:720px" width="35" height="22">
 <path d="M6.3 10.7 h5 l-2.5 2.6z" fill="#444"/>
 <g fill="#aaa"><rect x="25.8" y="9" width="1.4" height="1.4"/><rect x="23" y="12" width="1.4" height="1.4"/><rect x="25.8" y="12" width="1.4" height="1.4"/><rect x="20" y="15" width="1.4" height="1.4"/><rect x="23" y="15" width="1.4" height="1.4"/><rect x="25.8" y="15" width="1.4" height="1.4"/></g>
</svg>
<!-- axes -->
<svg style="left:0;top:0" width="1145" height="743">
 <path d="M516.5 449.5 V419.5 M516.5 449.5 H546.5" stroke="#bf3dff" stroke-width="1.1" fill="none"/>
 <path d="M511.3 428.5 L516.5 419.5 L521.7 428.5 M537.3 444.3 L546.7 449.5 L537.3 454.6" stroke="#bf3dff" stroke-width="1" fill="none"/>
</svg>
</body></html>
